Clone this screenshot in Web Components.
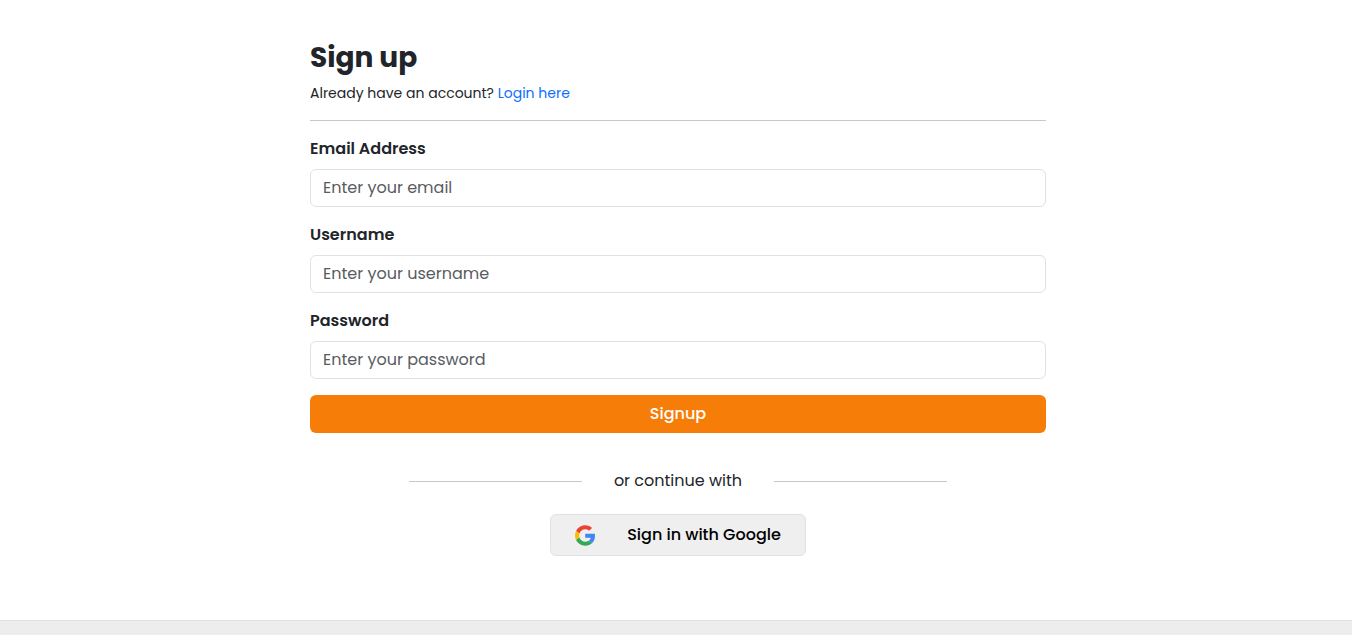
<!DOCTYPE html>
<html lang="en">
<head>
<meta charset="utf-8">
<meta name="viewport" content="width=device-width, initial-scale=1">
<title>Sign up</title>
<style>
  body {
    margin: 0;
    min-height: 100vh;
    display: flex;
    flex-direction: column;
    background: #fff;
    color: #212529;
    font: 400 16px/24px Poppins, Inter, sans-serif;
    --line: #dee2e6;
    --rule: #c7c8c9;
    --accent: #f67d07;
    --link: #0d6efd;
  }
</style>
</head>
<body>
<signup-page></signup-page>
<page-footer></page-footer>

<script>
  class BaseElement extends HTMLElement {
    render(html) {
      const template = document.createElement('template');
      template.innerHTML = '<style>*{box-sizing:border-box}</style>' + html;
      this.attachShadow({ mode: 'open' }).append(template.content.cloneNode(true));
    }
  }

  customElements.define('form-header', class extends BaseElement {
    constructor() {
      super();
      this.render(`
        <style>
          :host { display: block; border-bottom: 1px solid var(--rule); padding-bottom: 16px; }
          h1 { margin: 0 0 6px; font-size: 28px; line-height: 36px; font-weight: 700; }
          p { margin: 0; font-size: 14px; line-height: 22px; }
        </style>
        <h1><slot name="title"></slot></h1>
        <p><slot></slot></p>`);
    }
  });

  customElements.define('text-field', class extends BaseElement {
    constructor() {
      super();
      this.render(`
        <style>
          :host { display: block; }
          label { display: block; margin-bottom: 8px; font-weight: 600; }
          input {
            display: block; width: 100%; height: 38px; padding: 5px 12px 7px;
            border: 1px solid var(--line); border-radius: 6px; background: #fff;
            color: inherit; font: inherit;
          }
          input::placeholder { color: #595c5f; opacity: 1; }
          input:focus { outline: 2px solid var(--accent); }
        </style>
        <label for="control"></label>
        <input id="control">`);
    }
    connectedCallback() {
      this.shadowRoot.querySelector('label').textContent = this.getAttribute('label');
      const input = this.shadowRoot.querySelector('input');
      input.type = this.getAttribute('type') || 'text';
      input.placeholder = this.getAttribute('placeholder');
    }
  });

  customElements.define('primary-button', class extends BaseElement {
    constructor() {
      super();
      this.render(`
        <style>
          :host { display: block; }
          button {
            display: block; width: 100%; height: 38px; padding: 0 12px; border: 0; border-radius: 6px;
            background: var(--accent); color: #fff; font: inherit; font-weight: 500; cursor: pointer;
          }
        </style>
        <button type="button"><slot></slot></button>`);
    }
  });

  customElements.define('text-divider', class extends BaseElement {
    constructor() {
      super();
      this.render(`
        <style>
          :host { display: flex; align-items: center; gap: 32px; }
          hr { flex: 1; margin: 0; border: 0; border-top: 1px solid var(--rule); }
        </style>
        <hr><span><slot></slot></span><hr>`);
    }
  });

  customElements.define('google-button', class extends BaseElement {
    constructor() {
      super();
      this.render(`
        <style>
          :host { display: block; }
          button {
            display: flex; align-items: center; gap: 32px; height: 42px; padding: 0 24px;
            border: 1px solid var(--line); border-radius: 6px; background: #efefef;
            color: #000; font: inherit; font-weight: 500; cursor: pointer;
          }
          svg { display: block; width: 20px; height: 21px; }
        </style>
        <button type="button">
          <svg viewBox="0 0 47 48" aria-hidden="true">
            <path fill="#EA4335" d="M24 9.5c3.54 0 6.71 1.22 9.21 3.6l6.85-6.85C35.9 2.38 30.47 0 24 0 14.62 0 6.51 5.38 2.56 13.22l7.98 6.19C12.43 13.72 17.74 9.5 24 9.5z"/>
            <path fill="#4285F4" d="M46.98 24.55c0-1.57-.15-3.09-.38-4.55H24v9.02h12.94c-.58 2.96-2.26 5.48-4.78 7.18l7.73 6c4.51-4.18 7.09-10.36 7.09-17.65z"/>
            <path fill="#FBBC05" d="M10.53 28.59c-.48-1.45-.76-2.99-.76-4.59s.27-3.14.76-4.59l-7.98-6.19C.92 16.46 0 20.12 0 24c0 3.88.92 7.54 2.56 10.78l7.97-6.19z"/>
            <path fill="#34A853" d="M24 48c6.48 0 11.93-2.13 15.89-5.81l-7.73-6c-2.15 1.45-4.92 2.3-8.16 2.3-6.26 0-11.57-4.22-13.47-9.91l-7.98 6.19C6.51 42.62 14.62 48 24 48z"/>
          </svg>
          <slot></slot>
        </button>`);
    }
  });

  customElements.define('signup-page', class extends BaseElement {
    constructor() {
      super();
      this.render(`
        <style>
          :host { display: block; padding: 40px 16px 64px 20px; }
          main { max-width: 736px; margin: 0 auto; }
          form { display: grid; gap: 16px; margin-top: 16px; }
          a { color: var(--link); text-decoration: none; }
          text-divider { width: 73%; margin: 36px auto 21px; }
          .social { display: flex; justify-content: center; }
        </style>
        <main>
          <form-header>
            <span slot="title">Sign up</span>
            Already have an account? <a href="#login">Login here</a>
          </form-header>
          <form>
            <text-field label="Email Address" type="email" placeholder="Enter your email"></text-field>
            <text-field label="Username" placeholder="Enter your username"></text-field>
            <text-field label="Password" type="password" placeholder="Enter your password"></text-field>
            <primary-button>Signup</primary-button>
          </form>
          <text-divider>or continue with</text-divider>
          <div class="social"><google-button>Sign in with Google</google-button></div>
        </main>`);
    }
  });

  customElements.define('page-footer', class extends BaseElement {
    constructor() {
      super();
      this.render(`
        <style>
          :host { display: block; flex: 1; border-top: 1px solid var(--line); background: #ededed; }
        </style>
        <footer><slot></slot></footer>`);
    }
  });
</script>
</body>
</html>
